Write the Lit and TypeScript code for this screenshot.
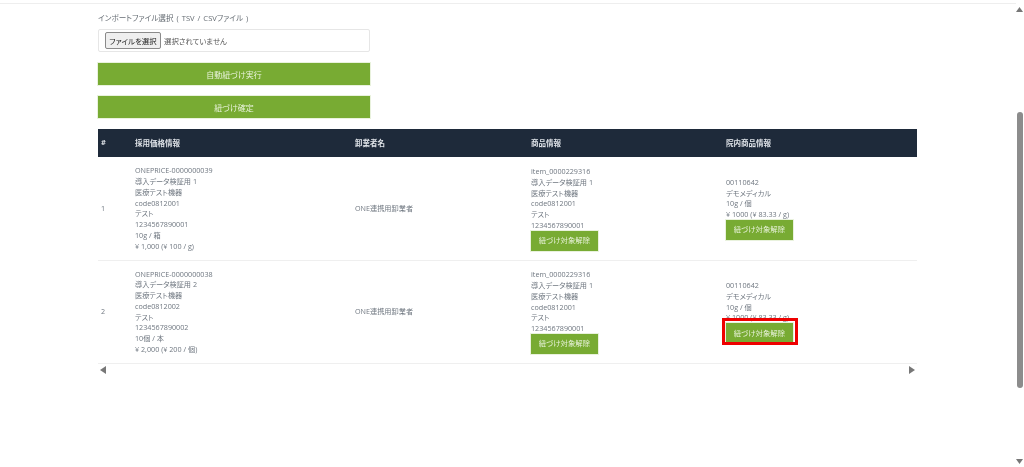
import { LitElement, html, css } from "lit";
import { customElement } from "lit/decorators.js";

interface Row {
  no: string;
  price: string[];
  vendor: string;
  item: string[];
  inner: string[];
  marked: boolean;
}

const rows: Row[] = [
  {
    no: "1",
    price: ["ONEPRICE-0000000039", "導入データ検証用 1", "医療テスト機器", "code0812001", "テスト", "1234567890001", "10g / 箱", "¥ 1,000 (¥ 100 / g)"],
    vendor: "ONE連携用卸業者",
    item: ["item_0000229316", "導入データ検証用 1", "医療テスト機器", "code0812001", "テスト", "1234567890001"],
    inner: ["00110642", "デモメディカル", "10g / 個", "¥ 1000 (¥ 83.33 / g)"],
    marked: false,
  },
  {
    no: "2",
    price: ["ONEPRICE-0000000038", "導入データ検証用 2", "医療テスト機器", "code0812002", "テスト", "1234567890002", "10個 / 本", "¥ 2,000 (¥ 200 / 個)"],
    vendor: "ONE連携用卸業者",
    item: ["item_0000229316", "導入データ検証用 1", "医療テスト機器", "code0812001", "テスト", "1234567890001"],
    inner: ["00110642", "デモメディカル", "10g / 個", "¥ 1000 (¥ 83.33 / g)"],
    marked: true,
  },
];

@customElement("app-root")
export class AppRoot extends LitElement {
  static styles = css`
    :host {
      display: flex;
      width: 1024px;
      height: 467px;
      overflow: hidden;
      background: #fff;
      font-family: "Open Sans", "Noto Sans CJK JP", sans-serif;
      font-size: 7.2px;
      font-feature-settings: "palt";
      color: #6f7780;
      filter: blur(0.3px);
    }
    .page { flex: 1; min-width: 0; display: flex; flex-direction: column; }
    .topline { height: 3px; border-bottom: 1px solid #eeeeee; flex: none; }
    .content { width: 819px; margin-left: 98px; display: flex; flex-direction: column; }
    .label { font-size: 7.6px; line-height: 12px; margin-top: 8px; color: #666d74; white-space: nowrap; word-spacing: 1px; }
    .file {
      margin-top: 5px; height: 23px; box-sizing: border-box; width: 272px;
      border: 1px solid #e6e6e6; border-radius: 2px;
      display: flex; align-items: center; padding-left: 6px; gap: 3px;
      color: #555; font-size: 7.4px;
    }
    .file button {
      height: 17px; width: 56px; padding: 0; box-sizing: border-box;
      background: #efefef; border: 1px solid #8a8a8a; border-radius: 2px;
      font: inherit; font-size: 7.4px; color: #222; white-space: nowrap;
    }
    .wide {
      width: 272px; height: 22px; border: 0; padding: 0;
      background: #78ab33; color: #e8f2da;
      font: inherit; font-size: 8px;
      box-shadow: 0 0 0 1px #e9f2dd;
    }
    .wide.first { margin-top: 11px; }
    .wide.second { margin-top: 11px; }
    table {
      margin-top: 11px; width: 819px; border-collapse: collapse; table-layout: fixed;
    }
    th {
      background: #1e2a3a; color: #dfe3e8; height: 28px; padding: 0 0 2px 4px; box-sizing: border-box;
      text-align: left; font-size: 7.5px; font-weight: 700;
    }
    td {
      height: 103px; box-sizing: border-box; padding: 0 0 0 4px; vertical-align: middle;
      border-bottom: 1px solid #efefef; line-height: 10.75px;
    }
    td.no { padding-left: 3px; }
    th.no { padding-left: 3px; }
    .line { white-space: nowrap; }
    .act {
      display: block; width: 67px; height: 20px; padding: 0; border: 0;
      background: #78ab33; color: #e8f2da; font: inherit; font-size: 7.4px;
      box-shadow: 0 0 0 1px #e9f2dd;
    }
    .mark { position: relative; display: block; width: 67px; }
    .mark::after {
      content: ""; position: absolute; left: -4px; top: -5px; right: -5px; bottom: -2px;
      border: 3px solid #ee0000; pointer-events: none;
    }
    .hscroll {
      width: 819px; height: 10px; margin-top: 1px;
      display: flex; justify-content: space-between; align-items: center; padding: 0 2px;
      box-sizing: border-box;
    }
    .hscroll svg, .vscroll svg { display: block; }
    .vscroll {
      flex: none; width: 7px; margin-right: 1px; height: 467px;
      display: flex; flex-direction: column; align-items: center;
      padding-top: 7px; padding-bottom: 3px; box-sizing: border-box;
    }
    .thumb { width: 6px; height: 276px; margin-top: 100px; border-radius: 3px; background: #8c8c8c; }
    .end { margin-top: auto; }
  `;

  private lines(items: string[]) {
    return items.map((t) => html`<div class="line">${t}</div>`);
  }

  render() {
    return html`
      <div class="page">
        <div class="topline"></div>
        <div class="content">
          <div class="label">インポートファイル選択 ( TSV / CSVファイル )</div>
          <div class="file"><button>ファイルを選択</button><span>選択されていません</span></div>
          <button class="wide first">自動紐づけ実行</button>
          <button class="wide second">紐づけ確定</button>
          <table>
            <colgroup>
              <col style="width:33px" /><col style="width:220px" /><col style="width:176px" /><col style="width:195px" /><col style="width:195px" />
            </colgroup>
            <thead>
              <tr><th class="no">#</th><th>採用価格情報</th><th>卸業者名</th><th>商品情報</th><th>院内商品情報</th></tr>
            </thead>
            <tbody>
              ${rows.map(
                (r) => html`<tr>
                  <td class="no">${r.no}</td>
                  <td>${this.lines(r.price)}</td>
                  <td>${r.vendor}</td>
                  <td class="item">${this.lines(r.item)}<button class="act">紐づけ対象解除</button></td>
                  <td class="inner">
                    ${this.lines(r.inner)}
                    <span class=${r.marked ? "mark" : ""}><button class="act">紐づけ対象解除</button></span>
                  </td>
                </tr>`
              )}
            </tbody>
          </table>
          <div class="hscroll">
            <svg width="6" height="8" viewBox="0 0 6 8"><path d="M6 0V8L0 4Z" fill="#777" /></svg>
            <svg width="6" height="8" viewBox="0 0 6 8"><path d="M0 0V8L6 4Z" fill="#777" /></svg>
          </div>
        </div>
      </div>
      <div class="vscroll">
        <svg width="7" height="5" viewBox="0 0 7 5"><path d="M3.5 0L7 5H0Z" fill="#777" /></svg>
        <div class="thumb"></div>
        <svg class="end" width="7" height="5" viewBox="0 0 7 5"><path d="M3.5 5L7 0H0Z" fill="#777" /></svg>
      </div>
    `;
  }
}
